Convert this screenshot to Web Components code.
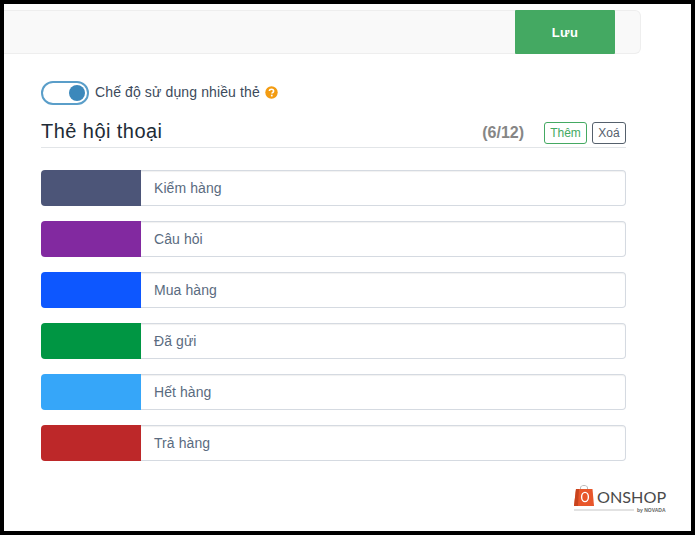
<!DOCTYPE html>
<html lang="vi">
<head>
<meta charset="utf-8">
<title>Thẻ hội thoại</title>
<style>
  html, body { margin: 0; padding: 0; background: #000; }
  body { height: 535px; box-sizing: border-box; border: 4px solid #000; font-family: "Liberation Sans", Arial, sans-serif; }
</style>
</head>
<body>
<tag-page>
  <save-bar></save-bar>
  <mode-toggle>Chế độ sử dụng nhiều thẻ</mode-toggle>
  <tag-header count="(6/12)">Thẻ hội thoại</tag-header>
  <div class="rows">
    <tag-row color="#4c5578">Kiểm hàng</tag-row>
    <tag-row color="#8229a0">Câu hỏi</tag-row>
    <tag-row color="#0d57ff">Mua hàng</tag-row>
    <tag-row color="#009643">Đã gửi</tag-row>
    <tag-row color="#36a6f9">Hết hàng</tag-row>
    <tag-row color="#bd2829">Trả hàng</tag-row>
  </div>
  <brand-logo></brand-logo>
</tag-page>

<script>
class TagPage extends HTMLElement {
  connectedCallback() {
    this.attachShadow({ mode: 'open' });
    this.shadowRoot.innerHTML = `
      <style>
        :host {
          display: flex;
          flex-direction: column;
          height: 527px;
          background: #fff;
          padding-top: 6px;
          box-sizing: border-box;
          color: #212529;
        }
        ::slotted(.rows) {
          display: flex;
          flex-direction: column;
          gap: 15px;
          margin: 22px 65px 0 37px;
        }
      </style>
      <slot></slot>
    `;
  }
}

class SaveBar extends HTMLElement {
  connectedCallback() {
    this.attachShadow({ mode: 'open' });
    this.shadowRoot.innerHTML = `
      <style>
        :host {
          display: flex;
          justify-content: flex-end;
          height: 44px;
          width: 637px;
          box-sizing: border-box;
          padding-right: 25px;
          background: #f9f9f9;
          border: 1px solid #eeeeee;
          border-left: 0;
          border-radius: 0 6px 6px 0;
        }
        button {
          width: 100px;
          height: 44px;
          margin: -1px 0;
          border: 0;
          border-radius: 1px;
          background: #44a962;
          color: #fff;
          font: bold 13px "Liberation Sans", Arial, sans-serif;
          letter-spacing: .4px;
        }
      </style>
      <button>Lưu</button>
    `;
  }
}

class ModeToggle extends HTMLElement {
  connectedCallback() {
    this.attachShadow({ mode: 'open' });
    this.shadowRoot.innerHTML = `
      <style>
        :host {
          display: flex;
          align-items: center;
          margin: 27px 0 0 37px;
          height: 24px;
          font-size: 14px;
          color: #3c4a5b;
        }
        .switch {
          width: 48px;
          height: 24px;
          box-sizing: border-box;
          border: 2px solid #5a9ec9;
          border-radius: 12px;
          background: #fff;
          display: flex;
          align-items: center;
          justify-content: flex-end;
          padding-right: 2px;
          margin-right: 6px;
        }
        .knob {
          width: 16px;
          height: 16px;
          border-radius: 50%;
          background: #3c88bb;
        }
        .label { letter-spacing: .12px; padding-bottom: 2px; }
        .help { margin: 0 0 1px 5px; display: block; }
      </style>
      <span class="switch"><span class="knob"></span></span>
      <span class="label"><slot></slot></span>
      <svg class="help" width="13" height="13" viewBox="0 0 13 13">
        <circle cx="6.5" cy="6.5" r="6.2" fill="#f39c12"/>
        <path d="M4.4 5.1c0-1.2.9-1.9 2.1-1.9s2.1.7 2.1 1.8c0 1.5-1.7 1.5-1.7 2.6" fill="none" stroke="#fff" stroke-width="1.6"/>
        <rect x="5.9" y="8.7" width="1.7" height="1.7" fill="#fff"/>
      </svg>
    `;
  }
}

class TagHeader extends HTMLElement {
  connectedCallback() {
    const count = this.getAttribute('count');
    this.attachShadow({ mode: 'open' });
    this.shadowRoot.innerHTML = `
      <style>
        :host {
          display: flex;
          align-items: center;
          margin: 0 65px 0 37px;
          height: 43px;
          padding: 17px 0 3px;
          box-sizing: border-box;
          border-bottom: 1px solid #e2e5e8;
        }
        .title { font-size: 20px; color: #212b36; flex: 1; letter-spacing: .45px; margin-bottom: 4px; }
        .count { font-size: 16px; font-weight: bold; color: #868686; margin: 0 20px 1px 0; }
        .btn {
          height: 22px;
          box-sizing: border-box;
          border: 1px solid;
          border-radius: 3px;
          background: #fff;
          padding: 0;
          font: 12px "Liberation Sans", Arial, sans-serif;
        }
        .add { width: 43px; border-color: #44a962; color: #44a962; margin-right: 5px; }
        .del { width: 34px; border-color: #55606c; color: #55606c; }
      </style>
      <span class="title"><slot></slot></span>
      <span class="count">${count}</span>
      <button class="btn add">Thêm</button>
      <button class="btn del">Xoá</button>
    `;
  }
}

class TagRow extends HTMLElement {
  connectedCallback() {
    const color = this.getAttribute('color');
    this.attachShadow({ mode: 'open' });
    this.shadowRoot.innerHTML = `
      <style>
        :host {
          display: flex;
          height: 36px;
          box-sizing: border-box;
          font-size: 14px;
          color: #5a6b80;
          letter-spacing: .08px;
        }
        .swatch {
          width: 100px;
          background: ${color};
          border-radius: 4px 0 0 4px;
        }
        .field {
          flex: 1;
          display: flex;
          align-items: center;
          padding-left: 13px;
          background: #fff;
          border: solid #d5dae1;
          border-width: 1px 1px 1px 0;
          border-radius: 0 4px 4px 0;
          box-shadow: inset 0 1px 1px rgba(0, 0, 0, .06);
          box-sizing: border-box;
        }
      </style>
      <span class="swatch"></span>
      <span class="field"><slot></slot></span>
    `;
  }
}

class BrandLogo extends HTMLElement {
  connectedCallback() {
    this.attachShadow({ mode: 'open' });
    this.shadowRoot.innerHTML = `
      <style>
        :host {
          display: flex;
          flex-direction: column;
          align-self: flex-end;
          width: 92px;
          margin: 24px 25px 0 0;
        }
        .top { display: flex; align-items: center; height: 22px; }
        svg { flex: none; display: block; }
        .name { font: 16.2px Lato, "Liberation Sans", sans-serif; color: #4a4a4a; margin: 2px 0 0 3px; line-height: 20px; white-space: nowrap; }
        .sub { display: flex; align-items: center; height: 5px; margin-top: 0; }
        .line { width: 60px; height: 2px; background: #e2e2e2; margin-right: 3px; flex: none; }
        .by { font-size: 5px; color: #666; font-weight: bold; white-space: nowrap; }
      </style>
      <div class="top">
        <svg width="20" height="22" viewBox="0 0 20 22">
          <path d="M6.5 5V3C6.5 1.2 8 .5 10 .5S13.5 1.2 13.5 3V5" fill="none" stroke="#bbb" stroke-width="1"/>
          <path d="M2 4h16.5L20 21H0z" fill="#e8562a"/>
          <path d="M2 4h3L4 21H0z" fill="#c8441e"/>
          <ellipse cx="11" cy="12" rx="3.4" ry="4.6" fill="none" stroke="#fff" stroke-width="1.4"/>
        </svg>
        <span class="name">ONSHOP</span>
      </div>
      <div class="sub"><span class="line"></span><span class="by">by NOVADA</span></div>
    `;
  }
}

customElements.define('tag-page', TagPage);
customElements.define('save-bar', SaveBar);
customElements.define('mode-toggle', ModeToggle);
customElements.define('tag-header', TagHeader);
customElements.define('tag-row', TagRow);
customElements.define('brand-logo', BrandLogo);
</script>
</body>
</html>
